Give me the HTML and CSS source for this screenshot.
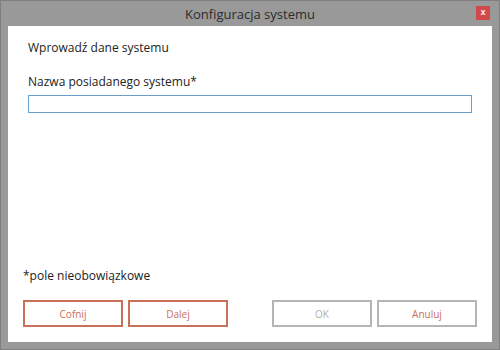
FILE: index.html
```html
<!DOCTYPE html>
<html lang="pl">

<head>
    <meta charset="UTF-8">
    <meta name="viewport" content="width=device-width, initial-scale=1.0">
    <title>Konfiguracja systemu</title>
    <link rel="stylesheet" href="styles.css">
</head>

<body>
    <div class="window">
        <!-- Title bar -->
        <div class="title-bar">
            <span class="title">Konfiguracja systemu</span>
            <button class="close-btn" title="Zamknij">x</button>
        </div>

        <!-- Dialog content -->
        <div class="dialog">
            <p class="intro">Wprowadź dane systemu</p>
            <label class="field-label" for="systemName">Nazwa posiadanego systemu*</label>
            <input type="text" id="systemName" class="field-input">

            <div class="spacer"></div>

            <p class="note">*pole nieobowiązkowe</p>

            <div class="buttons">
                <div class="button-group">
                    <button class="btn btn-accent">Cofnij</button>
                    <button class="btn btn-accent">Dalej</button>
                </div>
                <div class="button-group">
                    <button class="btn btn-disabled" disabled>OK</button>
                    <button class="btn btn-plain">Anuluj</button>
                </div>
            </div>
        </div>
    </div>
</body>

</html>
```

FILE: styles.css
```css
* {
    margin: 0;
    padding: 0;
    box-sizing: border-box;
}

body {
    font-family: 'Open Sans', 'Noto Sans', sans-serif;
    background-color: #999;
    overflow: hidden;
}

.window {
    width: 500px;
    height: 350px;
    background-color: #999;
    border: 1px solid #7f7f7f;
    display: flex;
    flex-direction: column;
    padding: 0 7px 7px 7px;
}

.title-bar {
    height: 25px;
    display: flex;
    align-items: center;
    justify-content: center;
    position: relative;
}

.title {
    font-size: 13px;
    color: #2b2b2b;
}

.close-btn {
    position: absolute;
    top: 5px;
    right: 2px;
    width: 14px;
    height: 14px;
    background-color: #d0494b;
    color: #fde;
    border: none;
    font-family: 'DejaVu Sans', sans-serif;
    font-size: 8px;
    font-weight: bold;
    line-height: 14px;
    text-align: center;
    cursor: pointer;
}

.dialog {
    flex: 1;
    background-color: #fff;
    display: flex;
    flex-direction: column;
    padding: 13px 15px 15px 15px;
    color: #222;
    font-size: 12px;
}

.intro {
    margin-left: 5px;
    margin-bottom: 17px;
}

.field-label {
    margin-left: 5px;
    margin-bottom: 5px;
}

.field-input {
    margin: 0 5px;
    height: 18px;
    border: 1px solid #6a9fcb;
    outline: none;
}

.spacer {
    flex: 1;
}

.note {
    margin-bottom: 16px;
}

.buttons {
    display: flex;
    justify-content: space-between;
}

.button-group {
    display: flex;
    gap: 5px;
}

.btn {
    width: 100px;
    height: 27px;
    background-color: #fff;
    border: 2px solid;
    font-family: 'Open Sans', 'Noto Sans', sans-serif;
    font-size: 10px;
    cursor: pointer;
}

.btn-accent {
    border-color: #c9705a;
    color: #c9705a;
}

.btn-disabled {
    border-color: #b5b5b5;
    color: #b0b0b0;
    cursor: default;
}

.btn-plain {
    border-color: #b5b5b5;
    color: #c9705a;
}
```
